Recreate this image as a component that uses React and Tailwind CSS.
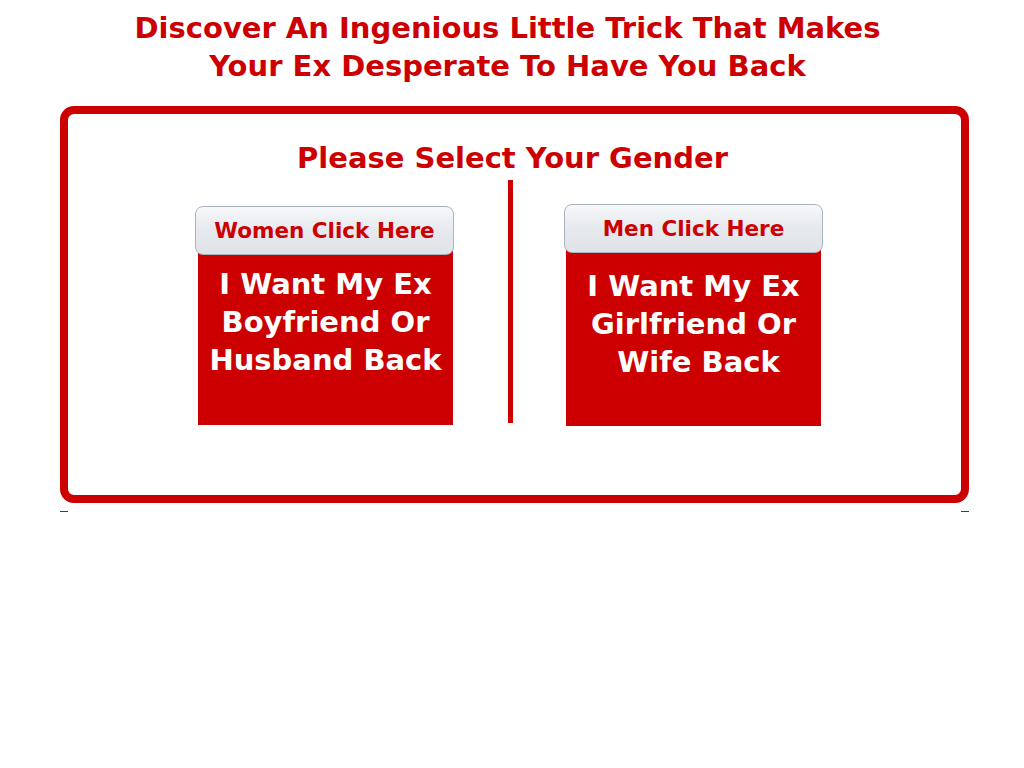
import React from 'react';

const font = { fontFamily: '"DejaVu Sans", Verdana, sans-serif' };

const GenderCard = ({ label, lines, top, textTop, bodyHeight, inset }) => (
  <div className={`flex w-[259px] flex-col ${top}`}>
    <div className="relative z-10 flex h-[49px] items-center justify-center rounded-[8px] border border-[#a9b4c1] bg-gradient-to-b from-[#f6f8fa] via-[#e6e9ed] to-[#dfe3e7]">
      <span className="text-[21.5px] font-bold leading-none text-[#cc0000]">{label}</span>
    </div>
    <div className={`-mt-[5px] bg-[#cc0000] ${inset} ${bodyHeight} ${textTop}`}>
      {lines.map((line) => (
        <div key={line} className="whitespace-pre text-center text-[29px] font-bold leading-[38px] text-white">
          {line}
        </div>
      ))}
    </div>
  </div>
);

export default function App() {
  return (
    <div className="min-h-[768px] w-[1024px] bg-white" style={font}>
      <div className="pt-[9px] pr-[9px] text-center text-[29px] font-bold leading-[38px] text-[#cc0000]">
        <div>Discover An Ingenious Little Trick That Makes</div>
        <div>Your Ex Desperate To Have You Back</div>
      </div>

      <div className="ml-[60px] mt-[21px] w-[909px]">
        <div className="h-[397px] rounded-[14px] border-[8px] border-[#cc0000] pt-[25px]">
          <div className="pr-[4px] text-center text-[29px] font-bold leading-[38px] text-[#cc0000]">
            Please Select Your Gender
          </div>
          <div className="flex items-start pl-[127px] pt-[3px]">
            <GenderCard
              label="Women Click Here"
              lines={['I Want My Ex', 'Boyfriend Or', 'Husband Back']}
              top="mt-[26px]"
              textTop="pt-[15px]"
              bodyHeight="h-[175px]"
              inset="ml-[3px] mr-[1px]"
            />
            <div className="ml-[54px] mr-[51px] h-[243px] w-[5px] bg-[#cc0000]" />
            <GenderCard
              label="Men Click Here"
              lines={['I Want My Ex', 'Girlfriend Or', ' Wife Back']}
              top="mt-[24px]"
              textTop="pt-[19px]"
              bodyHeight="h-[178px]"
              inset="ml-[2px] mr-[2px]"
            />
          </div>
        </div>
        <div className="mt-[8px] flex justify-between">
          <div className="h-px w-[8px] bg-[#cc0000]" />
          <div className="h-px w-[8px] bg-[#cc0000]" />
        </div>
      </div>
    </div>
  );
}
